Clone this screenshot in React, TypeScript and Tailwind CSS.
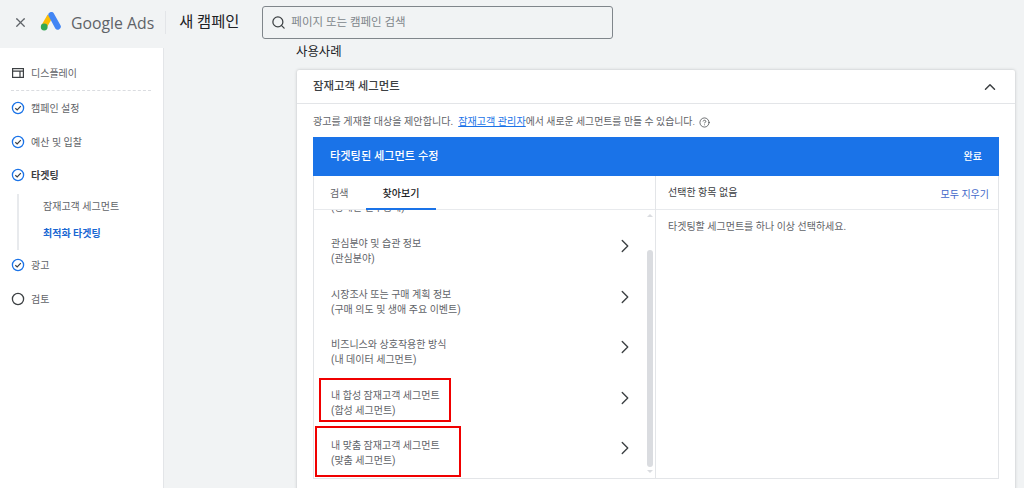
import React from 'react';
import { X, Search, ChevronUp, ChevronRight, CircleHelp } from 'lucide-react';

const kr = "font-['Roboto','Noto_Sans_CJK_KR',sans-serif]";

const CheckIcon = () => (
  <svg width="14" height="14" viewBox="0 0 14 14" fill="none" className="shrink-0">
    <circle cx="7" cy="7" r="5.6" stroke="#1a73e8" strokeWidth="1.3" />
    <path d="M4.3 7.2 6.2 9 9.8 5.2" stroke="#3c4043" strokeWidth="1.2" />
  </svg>
);

const CircleIcon = () => (
  <svg width="14" height="14" viewBox="0 0 14 14" fill="none" className="shrink-0">
    <circle cx="7" cy="7" r="5.6" stroke="#3c4043" strokeWidth="1.3" />
  </svg>
);

const CampaignIcon = () => (
  <svg width="14" height="14" viewBox="0 0 14 14" fill="none" className="shrink-0">
    <rect x="1.6" y="2.6" width="10.8" height="8.8" stroke="#3c4043" strokeWidth="1.2" />
    <path d="M1.6 5.2h10.8M9 5.2v6.2" stroke="#3c4043" strokeWidth="1.2" />
  </svg>
);

const AdsLogo = () => (
  <svg width="22" height="20" viewBox="0 0 22 20" className="shrink-0">
    <path d="M7.6 2.6 1.6 13l5 2.8 5.4-9.4z" fill="#fbbc04" />
    <path d="M8.2 3.2a3.1 3.1 0 0 1 5.4-2.2l7 12.4a3.1 3.1 0 0 1-5.3 3.1z" fill="#4285f4" />
    <circle cx="4.2" cy="15" r="3.4" fill="#34a853" />
  </svg>
);

const rows = [
  { title: '관심분야 및 습관 정보', sub: '(관심분야)' },
  { title: '시장조사 또는 구매 계획 정보', sub: '(구매 의도 및 생애 주요 이벤트)' },
  { title: '비즈니스와 상호작용한 방식', sub: '(내 데이터 세그먼트)' },
  { title: '내 합성 잠재고객 세그먼트', sub: '(합성 세그먼트)' },
  { title: '내 맞춤 잠재고객 세그먼트', sub: '(맞춤 세그먼트)' },
];

const App = () => {
  return (
    <div className={`relative h-[488px] w-[1024px] overflow-hidden bg-[#f1f3f4] flex flex-col ${kr}`}>
      {/* Top bar */}
      <header className="h-12 shrink-0 flex items-start">
        <X className="h-[15px] w-[15px] ml-[13px] mt-[15px] text-[#5f6368]" strokeWidth={2} />
        <div className="ml-[12px] mt-[12px]"><AdsLogo /></div>
        <span className="ml-[9px] mt-[10px] text-[15.8px] leading-[26px] text-[#5f6368] font-['Open_Sans',sans-serif]">Google Ads</span>
        <div className="ml-[11px] mt-[11px] h-[23px] w-px bg-[#e3e5e8]" />
        <span className="ml-[13px] mt-[9px] text-[15.3px] leading-[26px] text-[#202124]">새 캠페인</span>
        <div className="ml-[23px] mt-[6px] h-[33px] w-[351px] rounded-[3px] border border-[#80868b] flex items-center pl-[8px]">
          <Search className="h-[15px] w-[15px] text-[#3c4043]" strokeWidth={2} />
          <span className="ml-[5px] text-[11.5px] text-[#80868b]">페이지 또는 캠페인 검색</span>
        </div>
      </header>

      <div className="flex-1 flex min-h-0">
        {/* Sidebar */}
        <aside className="w-[164px] shrink-0 bg-white border-r border-[#e3e5e8] pl-[11px] pt-[17px] text-[10px] text-[#5f6368]">
          <div className="flex items-center gap-[6px] h-4">
            <CampaignIcon /><span>디스플레이</span>
          </div>
          <div className="mt-[9px] mr-[12px] border-t border-dashed border-[#dadce0]" />
          <div className="mt-[9px] flex items-center gap-[6px] h-4"><CheckIcon /><span>캠페인 설정</span></div>
          <div className="mt-[18px] flex items-center gap-[6px] h-4"><CheckIcon /><span>예산 및 입찰</span></div>
          <div className="mt-[17px] flex items-center gap-[6px] h-4 font-bold text-[#3c4043]"><CheckIcon /><span>타겟팅</span></div>
          <div className="mt-[11px] ml-[6px] border-l-2 border-[#e8eaed] h-[56px] pl-[24px] pt-[5px]">
            <div className="h-4 leading-4">잠재고객 세그먼트</div>
            <div className="mt-[11px] h-4 leading-4 font-bold text-[#1967d2]">최적화 타겟팅</div>
          </div>
          <div className="mt-[7px] flex items-center gap-[6px] h-4"><CheckIcon /><span>광고</span></div>
          <div className="mt-[18px] flex items-center gap-[6px] h-4"><CircleIcon /><span>검토</span></div>
        </aside>

        {/* Main */}
        <main className="flex-1 min-w-0 pl-[132px] pr-[9px]">
          <div className="relative -mt-[4px] h-[26px] overflow-hidden text-[12.4px] leading-[16px] text-[#202124]">사용사례</div>
          <section className="ml-px bg-white rounded-t-[2px] shadow-[0_0_3px_rgba(60,64,67,0.3)] h-[430px]">
            <div className="h-[34px] flex items-center justify-between border-b border-[#e3e5e8] pl-[16px] pr-[16px]">
              <span className="pt-[1px] text-[11.4px] text-[#3c4043] font-medium">잠재고객 세그먼트</span>
              <ChevronUp className="h-[18px] w-[18px] text-[#3c4043]" strokeWidth={2} />
            </div>
            <div className="pl-[16px] pr-[16px]">
              <p className="h-[33px] pt-[3px] flex items-center text-[10.1px] text-[#5f6368]">
                광고를 게재할 대상을 제안합니다.&nbsp;&nbsp;
                <a className="text-[#1a73e8] underline">잠재고객 관리자</a>
                <span className="text-[9.9px]">에서 새로운 세그먼트를 만들 수 있습니다.</span>
                <CircleHelp className="ml-[4px] h-[11px] w-[11px] text-[#3c4043]" strokeWidth={1.6} />
              </p>

              <div className="h-[39px] bg-[#1a73e8] flex items-center justify-between px-[17px] text-white font-medium">
                <span className="pt-[1px] text-[11.2px]">타겟팅된 세그먼트 수정</span>
                <span className="text-[10px]">완료</span>
              </div>

              <div className="flex h-[303px] border-x border-b border-[#e3e5e8]">
                {/* Browse column */}
                <div className="w-[342px] shrink-0 border-r border-[#e3e5e8] flex flex-col">
                  <div className="h-[34px] shrink-0 flex border-b border-[#e8eaed] text-[10px]">
                    <div className="w-[52px] pl-[16px] leading-[35px] text-[#5f6368]">검색</div>
                    <div className="w-[70px] -mb-px border-b-2 border-[#1a73e8] text-center leading-[35px] font-medium text-[#202124]">찾아보기</div>
                  </div>
                  <div className="flex-1 min-h-0 relative flex overflow-hidden">
                    <div className="flex-1 min-w-0 -mt-[8px]">
                      <div className="h-[15px] pl-[17px] text-[10px] leading-[12px] text-[#5f6368] whitespace-nowrap">(상세한 인구통계)</div>
                      {rows.map((row, i) => (
                        <div key={i} className="h-[50.5px] flex items-start justify-between pl-[17px] pr-[9px] pt-[19px]">
                          <div className="text-[10px] leading-[15px] text-[#5f6368]">
                            <div>{row.title}</div>
                            <div>{row.sub}</div>
                          </div>
                          <ChevronRight className="-mt-[1px] h-[22px] w-[22px] text-[#3c4043]" strokeWidth={1.5} />
                        </div>
                      ))}
                    </div>
                    <div className="w-[10px] shrink-0 flex flex-col items-center pt-[4px]">
                      <div className="h-0 w-0 border-x-[3px] border-b-[3px] border-x-transparent border-b-[#dadce0]" />
                      <div className="mt-[33px] h-[217px] w-[6px] rounded-full bg-[#dadce0]" />
                      <div className="mt-[3px] h-0 w-0 border-x-[3px] border-t-[3px] border-x-transparent border-t-[#dadce0]" />
                    </div>
                  </div>
                </div>

                {/* Selected column */}
                <div className="flex-1 min-w-0 flex flex-col">
                  <div className="h-[34px] shrink-0 flex items-center justify-between border-b border-[#e8eaed] pl-[12px] pr-[9px] text-[10px]">
                    <span className="text-[#3c4043]">선택한 항목 없음</span>
                    <span className="pt-[3px] text-[#4267c9]">모두 지우기</span>
                  </div>
                  <p className="pl-[12px] pt-[9px] text-[10px] text-[#5f6368]">타겟팅할 세그먼트를 하나 이상 선택하세요.</p>
                </div>
              </div>
            </div>
          </section>
        </main>
      </div>

      {/* Red annotation boxes */}
      <div className="absolute left-[319px] top-[378px] h-[44px] w-[132px] border-2 border-[#f00000]" />
      <div className="absolute left-[315px] top-[426px] h-[51px] w-[146px] border-2 border-[#f00000]" />
    </div>
  );
};

export default App;
